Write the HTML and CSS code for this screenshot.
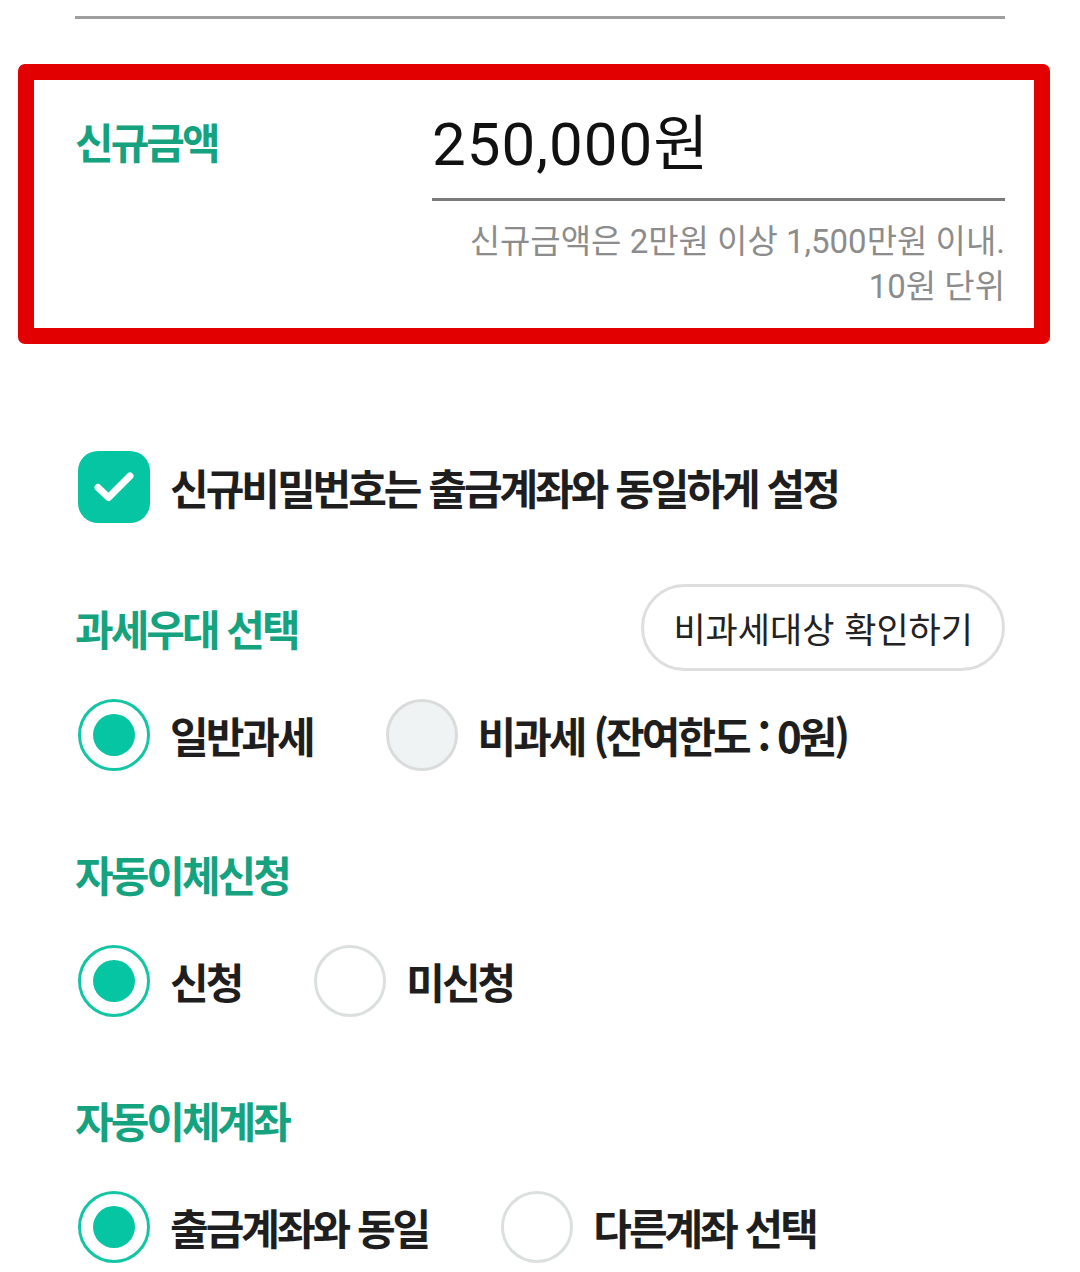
FILE: index.html
```html
<!DOCTYPE html>
<html lang="ko">
<head>
<meta charset="utf-8">
<title>신규금액</title>
<link rel="stylesheet" href="styles.css">
</head>
<body>
<div class="page">
  <div class="prev-line"></div>

  <section class="amount-box">
    <div class="amount-label">신규금액</div>
    <div class="amount-field">
      <div class="amount-value">250,000원</div>
      <div class="amount-hint">신규금액은 2만원 이상 1,500만원 이내.<br>10원 단위</div>
    </div>
  </section>

  <div class="check-row">
    <span class="checkbox">
      <svg width="72" height="72" viewBox="0 0 72 72"><path d="M20 36.5 L30.5 46.5 L52 25" fill="none" stroke="#fff" stroke-width="7" stroke-linecap="round" stroke-linejoin="round"/></svg>
    </span>
    <span class="bold-text">신규비밀번호는 출금계좌와 동일하게 설정</span>
  </div>

  <div class="group first">
    <div class="group-head">
      <h2 class="group-title">과세우대 선택</h2>
      <button class="pill-btn" type="button">비과세대상 확인하기</button>
    </div>
    <div class="radio-row">
      <label class="option"><span class="radio selected"></span><span class="bold-text">일반과세</span></label>
      <label class="option"><span class="radio disabled"></span><span class="bold-text">비과세 (잔여한도 : 0원)</span></label>
    </div>
  </div>

  <div class="group">
    <div class="group-head">
      <h2 class="group-title">자동이체신청</h2>
    </div>
    <div class="radio-row">
      <label class="option"><span class="radio selected"></span><span class="bold-text">신청</span></label>
      <label class="option"><span class="radio"></span><span class="bold-text">미신청</span></label>
    </div>
  </div>

  <div class="group">
    <div class="group-head">
      <h2 class="group-title">자동이체계좌</h2>
    </div>
    <div class="radio-row">
      <label class="option"><span class="radio selected"></span><span class="bold-text">출금계좌와 동일</span></label>
      <label class="option"><span class="radio"></span><span class="bold-text">다른계좌 선택</span></label>
    </div>
  </div>
</div>
</body>
</html>
```

FILE: styles.css
```css
html, body {
  margin: 0;
  padding: 0;
  background: #ffffff;
}

body {
  font-family: "Noto Sans CJK KR", "Noto Sans", sans-serif;
  color: #1e1e1e;
}

.page {
  padding: 16px 75px 0 75px;
}

.prev-line {
  height: 3px;
  background: #9e9e9e;
}

.amount-box {
  display: flex;
  margin: 45px -45px 0 -57px;
  border: 16px solid #e30000;
  border-radius: 7px;
  padding: 26px 29px 19px 41px;
}

.amount-label {
  width: 357px;
  flex: none;
  font-size: 42px;
  font-weight: 700;
  letter-spacing: -3px;
  line-height: 70px;
  color: #15a37f;
}

.amount-field {
  flex: 1;
}

.amount-value {
  font-family: Roboto, "Noto Sans CJK KR", sans-serif;
  font-size: 60px;
  letter-spacing: 1px;
  line-height: 72px;
  color: #111111;
  padding-top: 3px;
  padding-bottom: 17px;
  border-bottom: 3px solid #7a7a7a;
}

.amount-hint {
  margin-top: 18px;
  text-align: right;
  font-family: Roboto, "Noto Sans CJK KR", sans-serif;
  font-size: 33px;
  letter-spacing: 0;
  line-height: 45px;
  color: #8c8c8c;
}

.check-row {
  margin-top: 107px;
  display: flex;
  align-items: center;
  gap: 20px;
  height: 72px;
}

.checkbox {
  width: 72px;
  height: 72px;
  border-radius: 20px;
  background: #06c5a2;
  display: block;
  flex: none;
  margin-left: 3px;
}

.checkbox svg {
  display: block;
}

.bold-text {
  font-size: 42px;
  font-weight: 700;
  letter-spacing: -3px;
  line-height: 72px;
  color: #1e1e1e;
  white-space: nowrap;
}

.group {
  margin-top: 59px;
}

.group.first {
  margin-top: 61px;
}

.group-head {
  height: 87px;
  display: flex;
  align-items: center;
  justify-content: space-between;
}

.group-title {
  margin: 0;
  font-size: 42px;
  font-weight: 700;
  letter-spacing: -3px;
  line-height: 50px;
  color: #15a37f;
}

.pill-btn {
  height: 87px;
  box-sizing: border-box;
  padding: 0 29px;
  border: 3px solid #dedede;
  border-radius: 44px;
  background: #ffffff;
  font-family: "Noto Sans CJK KR", sans-serif;
  font-size: 35px;
  font-weight: 400;
  color: #222222;
  line-height: 40px;
}

.radio-row {
  margin-top: 28px;
  height: 72px;
  display: flex;
  align-items: center;
  gap: 70px;
}

.option {
  display: flex;
  align-items: center;
  gap: 20px;
}

.radio {
  width: 72px;
  height: 72px;
  box-sizing: border-box;
  border-radius: 50%;
  border: 3px solid #dcdfdf;
  background: #ffffff;
  display: flex;
  align-items: center;
  justify-content: center;
  flex: none;
  margin-left: 3px;
}

.radio.selected {
  border-color: #12c6a4;
}

.radio.selected::after {
  content: "";
  width: 42px;
  height: 42px;
  border-radius: 50%;
  background: #06c5a2;
}

.radio.disabled {
  background: #eff3f4;
  border-color: #dadcdc;
}
```
